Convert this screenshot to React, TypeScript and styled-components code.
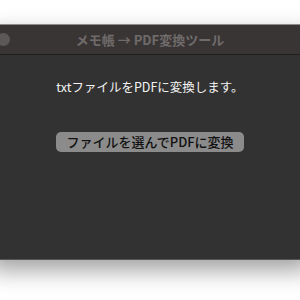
import React from 'react'
import styled, { createGlobalStyle } from 'styled-components'

const GlobalStyle = createGlobalStyle`
  html, body {
    margin: 0;
    padding: 0;
    background: #ffffff;
    overflow: hidden;
  }
  body {
    font-family: "Noto Sans CJK JP", "Noto Sans", sans-serif;
  }
`

const Stage = styled.div`
  width: 300px;
  height: 300px;
  padding-top: 24px;
  box-sizing: border-box;
  overflow: hidden;
`

const Window = styled.div`
  width: 322px;
  margin-left: -11px;
  height: 234px;
  display: flex;
  flex-direction: column;
  background: #323232;
  border-top: 1px solid #8c8a8a;
  border-bottom: 1px solid #555;
  box-shadow: 0 10px 22px rgba(0, 0, 0, 0.38);
`

const TitleBar = styled.div`
  height: 29px;
  display: flex;
  align-items: center;
  position: relative;
  background: #3a3535;
  border-bottom: 1px solid #1f1f1f;
`

const Light = styled.span`
  position: absolute;
  left: 8px;
  top: 8px;
  width: 13px;
  height: 13px;
  border-radius: 50%;
  background: #5c5858;
`

const Title = styled.div`
  flex: 1;
  text-align: center;
  color: #6f6b6b;
  font-size: 13px;
  font-weight: 700;
`

const Content = styled.div`
  flex: 1;
  display: flex;
  flex-direction: column;
  align-items: center;
  padding-top: 23px;
`

const Message = styled.p`
  margin: 0;
  color: #f2f2f2;
  font-size: 12.5px;
  line-height: 18px;
`

const ConvertButton = styled.button`
  margin-top: 36px;
  height: 20px;
  padding: 0 10px;
  border: none;
  border-radius: 5px;
  background: #8b8b8b;
  color: #111111;
  font-family: "Noto Sans CJK JP", "Noto Sans", sans-serif;
  font-size: 13px;
  font-weight: 500;
  line-height: 20px;
`

export default function App() {
  return (
    <Stage>
      <GlobalStyle />
      <Window>
        <TitleBar>
          <Light />
          <Title>メモ帳 → PDF変換ツール</Title>
        </TitleBar>
        <Content>
          <Message>txtファイルをPDFに変換します。</Message>
          <ConvertButton>ファイルを選んでPDFに変換</ConvertButton>
        </Content>
      </Window>
    </Stage>
  )
}
